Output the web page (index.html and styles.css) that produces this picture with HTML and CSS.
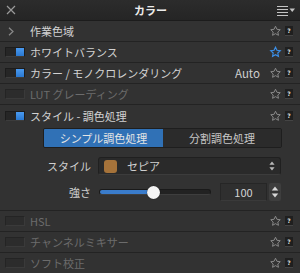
FILE: index.html
```html
<!DOCTYPE html>
<html lang="ja">
<head>
<meta charset="utf-8">
<link rel="stylesheet" href="styles.css">
</head>
<body>
<div class="panel">
  <div class="titlebar">
    <svg class="close" width="10" height="10" viewBox="0 0 10 10"><path d="M1 1L9 9M9 1L1 9" stroke="#9a9a9a" stroke-width="1.2"/></svg>
    <div class="title">カラー</div>
    <svg class="menu" width="18" height="12" viewBox="0 0 18 12"><path d="M0 1.5H11M0 4.5H11M0 7.5H11M0 10.5H11" stroke="#c4c4c4" stroke-width="1.2"/><path d="M12.5 3.5H18L15.25 7z" fill="#c4c4c4"/></svg>
  </div>

  <div class="row">
    <span class="lead"><svg width="6" height="9" viewBox="0 0 6 9"><path d="M1 0.8L5 4.5L1 8.2" fill="none" stroke="#8a8a8a" stroke-width="1.2"/></svg></span>
    <span class="label">作業色域</span>
    <span class="tools"><svg class="star" viewBox="0 0 24 24"><path d="M12 2.5l2.9 6.1 6.6.8-4.9 4.6 1.3 6.6L12 17.3l-5.9 3.3 1.3-6.6-4.9-4.6 6.6-.8z"/></svg><span class="help">?</span></span>
  </div>

  <div class="row">
    <span class="lead"><span class="toggle on"></span></span>
    <span class="label">ホワイトバランス</span>
    <span class="tools"><svg class="star blue" viewBox="0 0 24 24"><path d="M12 2.5l2.9 6.1 6.6.8-4.9 4.6 1.3 6.6L12 17.3l-5.9 3.3 1.3-6.6-4.9-4.6 6.6-.8z"/></svg><span class="help">?</span></span>
  </div>

  <div class="row">
    <span class="lead"><span class="toggle on"></span></span>
    <span class="label">カラー / モノクロレンダリング</span>
    <span class="value">Auto</span>
    <span class="tools"><svg class="star" viewBox="0 0 24 24"><path d="M12 2.5l2.9 6.1 6.6.8-4.9 4.6 1.3 6.6L12 17.3l-5.9 3.3 1.3-6.6-4.9-4.6 6.6-.8z"/></svg><span class="help">?</span></span>
  </div>

  <div class="row">
    <span class="lead"><span class="toggle off"></span></span>
    <span class="label dim">LUT グレーディング</span>
    <span class="tools"><svg class="star" viewBox="0 0 24 24"><path d="M12 2.5l2.9 6.1 6.6.8-4.9 4.6 1.3 6.6L12 17.3l-5.9 3.3 1.3-6.6-4.9-4.6 6.6-.8z"/></svg><span class="help">?</span></span>
  </div>

  <div class="row open">
    <span class="lead"><span class="toggle on"></span></span>
    <span class="label">スタイル - 調色処理</span>
    <span class="tools"><svg class="star" viewBox="0 0 24 24"><path d="M12 2.5l2.9 6.1 6.6.8-4.9 4.6 1.3 6.6L12 17.3l-5.9 3.3 1.3-6.6-4.9-4.6 6.6-.8z"/></svg><span class="help">?</span></span>
  </div>

  <div class="section">
    <div class="seg">
      <span class="seg-item active">シンプル調色処理</span>
      <span class="seg-item">分割調色処理</span>
    </div>
    <div class="field">
      <span class="flabel">スタイル</span>
      <div class="select">
        <span class="swatch"></span>
        <span class="sel-text">セピア</span>
        <svg class="updown" width="6" height="10" viewBox="0 0 6 10"><path d="M3 0.5L5.6 3.8H0.4z M3 9.5L5.6 6.2H0.4z" fill="#b8b8b8"/></svg>
      </div>
    </div>
    <div class="field">
      <span class="flabel">強さ</span>
      <div class="slider">
        <div class="track"><div class="fill" style="width:54px"></div></div>
        <div class="knob" style="left:48px"></div>
      </div>
      <div class="num">100</div>
      <div class="stepper">
        <svg width="12" height="18" viewBox="0 0 12 18"><path d="M6 3.5L9.2 7.5H2.8z" fill="#d8d8d8"/><path d="M1 9H11" stroke="#2a2a2a" stroke-width="1"/><path d="M6 14.5L9.2 10.5H2.8z" fill="#d8d8d8"/></svg>
      </div>
    </div>
  </div>

  <div class="row">
    <span class="lead"><span class="toggle off"></span></span>
    <span class="label dim">HSL</span>
    <span class="tools"><svg class="star" viewBox="0 0 24 24"><path d="M12 2.5l2.9 6.1 6.6.8-4.9 4.6 1.3 6.6L12 17.3l-5.9 3.3 1.3-6.6-4.9-4.6 6.6-.8z"/></svg><span class="help">?</span></span>
  </div>

  <div class="row">
    <span class="lead"><span class="toggle off"></span></span>
    <span class="label dim">チャンネルミキサー</span>
    <span class="tools"><svg class="star" viewBox="0 0 24 24"><path d="M12 2.5l2.9 6.1 6.6.8-4.9 4.6 1.3 6.6L12 17.3l-5.9 3.3 1.3-6.6-4.9-4.6 6.6-.8z"/></svg><span class="help">?</span></span>
  </div>

  <div class="row">
    <span class="lead"><span class="toggle off"></span></span>
    <span class="label dim">ソフト校正</span>
    <span class="tools"><svg class="star" viewBox="0 0 24 24"><path d="M12 2.5l2.9 6.1 6.6.8-4.9 4.6 1.3 6.6L12 17.3l-5.9 3.3 1.3-6.6-4.9-4.6 6.6-.8z"/></svg><span class="help">?</span></span>
  </div>
</div>
</body>
</html>
```

FILE: styles.css
```css
* { box-sizing: border-box; }
html, body { margin: 0; padding: 0; background: #323232; }
body {
  font-family: "Noto Sans CJK JP", "Noto Sans", sans-serif;
  font-size: 11px;
  color: #d0d0d0;
}
.panel {
  width: 300px;
  height: 273px;
  overflow: hidden;
  background: #323232;
}
.titlebar {
  height: 21px;
  display: grid;
  grid-template-columns: 1fr auto 1fr;
  align-items: center;
  background: linear-gradient(#2c2c2c, #252525);
  border-bottom: 1px solid #1c1c1c;
  padding: 0 5px 0 6px;
}
.close { justify-self: start; }
.title {
  font-weight: bold;
  font-size: 11px;
  color: #ececec;
  line-height: 20px;
}
.menu { justify-self: end; margin-top: 1px; }

.row {
  height: 21px;
  display: flex;
  align-items: center;
  padding: 0 7px 0 5px;
  border-bottom: 1px solid #232323;
  line-height: 20px;
}
.row.open { border-bottom: none; }
.lead {
  width: 20px;
  display: flex;
  align-items: center;
  justify-content: flex-start;
  padding-left: 3px;
}
.lead:has(.toggle) { padding-left: 0; }
.label {
  margin-left: 5px;
  flex: 1;
  color: #d2d2d2;
  white-space: nowrap;
}
.label.dim { color: #6c6c6c; }
.value { color: #cfcfcf; margin-right: 9px; font-size: 11.5px; }
.tools {
  display: flex;
  align-items: center;
  gap: 3px;
}
.star {
  width: 13px;
  height: 12px;
  fill: none;
  stroke: #8c8c8c;
  stroke-width: 1.9;
  stroke-linejoin: miter;
}
.star.blue { stroke: #3b8fe8; stroke-width: 2.3; }
.help {
  width: 8px;
  height: 10px;
  background: #1f1f1f;
  border-bottom: 1px solid #444;
  color: #dcdcdc;
  font-family: "DejaVu Sans", sans-serif;
  font-weight: bold;
  font-size: 6px;
  line-height: 9px;
  text-align: center;
}

.toggle {
  width: 20px;
  height: 10px;
  display: flex;
  justify-content: flex-end;
  align-items: center;
  border: 1px solid #1c1c1c;
  background: #262626;
  border-bottom-color: #3c3c3c;
}
.toggle.on::after {
  content: "";
  width: 8px;
  height: 8px;
  background: linear-gradient(#4a9af0, #2a78d0);
}
.toggle.off {
  background: #2c2c2c;
  border: 1px solid #242424;
  border-bottom-color: #3a3a3a;
  border-right-color: #3a3a3a;
}

.section {
  padding: 2px 18px 9px 0;
  border-bottom: 1px solid #232323;
}
.seg {
  margin-left: 43px;
  height: 20px;
  display: grid;
  grid-template-columns: 119px 1fr;
  border: 1px solid #1e1e1e;
  border-radius: 2px;
  overflow: hidden;
}
.seg-item {
  display: flex;
  align-items: center;
  justify-content: center;
  background: #2b2b2b;
  color: #c6c6c6;
  line-height: 18px;
}
.seg-item.active {
  background: #3071b6;
  color: #e4e4e4;
}
.field {
  display: flex;
  align-items: center;
  height: 18px;
  margin-top: 9px;
}
.field + .field { margin-top: 8px; }
.flabel {
  width: 91px;
  text-align: right;
  color: #cfcfcf;
  flex: none;
}
.select {
  margin-left: 7px;
  margin-right: 1px;
  flex: 1;
  height: 18px;
  display: flex;
  align-items: center;
  background: #2a2a2a;
  border: 1px solid #202020;
  border-bottom-color: #3c3c3c;
  border-radius: 3px;
  padding: 0 5px 0 5px;
}
.swatch {
  width: 13px;
  height: 13px;
  border-radius: 3px;
  background: #a6733a;
}
.sel-text { margin-left: 10px; flex: 1; color: #d0d0d0; }
.slider {
  position: relative;
  margin-left: 8px;
  width: 112px;
  height: 18px;
  display: flex;
  align-items: center;
}
.track {
  width: 100%;
  height: 6px;
  border-radius: 3px;
  background: #222;
  border: 1px solid #1a1a1a;
  border-bottom-color: #3e3e3e;
  overflow: hidden;
}
.fill { height: 100%; background: #3a7ccb; }
.knob {
  position: absolute;
  top: 2.5px;
  width: 13px;
  height: 13px;
  border-radius: 50%;
  background: #f4f4f4;
  box-shadow: 0 0 1px #000;
}
.num {
  margin-left: 9px;
  width: 47px;
  height: 18px;
  border: 1px solid #262626;
  border-bottom-color: #3a3a3a;
  background: #2f2f2f;
  text-align: center;
  line-height: 16px;
  color: #d4d4d4;
  font-size: 11px;
}
.stepper {
  margin-left: 2px;
  width: 12px;
  height: 18px;
  background: #3e3e3e;
  border-radius: 2px;
  display: flex;
}
```
